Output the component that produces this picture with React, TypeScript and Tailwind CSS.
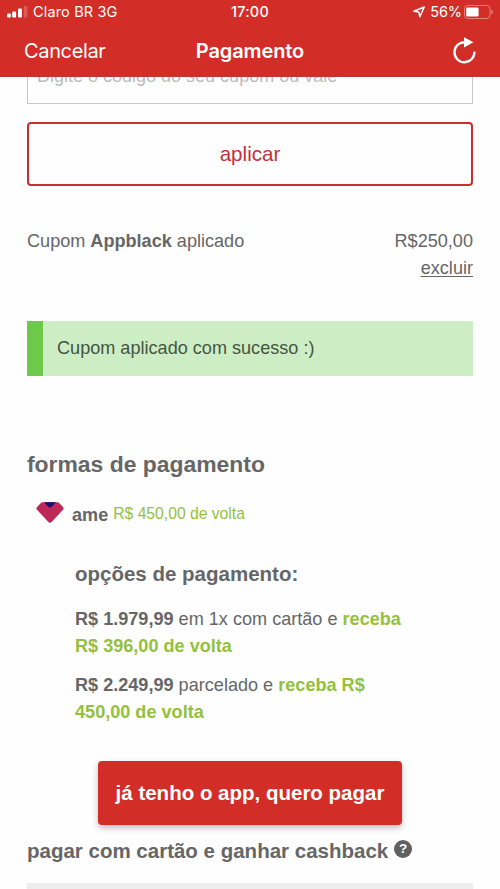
function SignalBars() {
  return (
    <svg width="21" height="12" viewBox="0 0 21 12" fill="#fff">
      <rect x="0" y="7.6" width="3.9" height="4" rx="1" />
      <rect x="5.2" y="5.6" width="3.9" height="6" rx="1" />
      <rect x="11" y="2.4" width="3.9" height="9.2" rx="1" />
      <rect x="16.8" y="0" width="3.6" height="11.6" rx="1" opacity="0.22" />
    </svg>
  );
}

function LocationIcon() {
  return (
    <svg width="12" height="12" viewBox="0 0 12 12" fill="none" stroke="#fff" strokeWidth="1.5" strokeLinejoin="round">
      <path d="M11.2 1 L0.9 5.2 L5.8 6.1 L6.9 10.8 Z" />
    </svg>
  );
}

function BatteryIcon() {
  return (
    <svg width="30" height="14" viewBox="0 0 30 14">
      <rect x="0.5" y="0.5" width="25.6" height="13" rx="3.4" fill="none" stroke="#fff" strokeOpacity="0.4" />
      <rect x="2.2" y="2.4" width="12.4" height="9.2" rx="1.4" fill="#fff" />
      <path d="M27.4 4.8 C29.2 5.3 29.2 8.7 27.4 9.2 Z" fill="#fff" opacity="0.45" />
    </svg>
  );
}

function ReloadIcon() {
  return (
    <svg width="24" height="28" viewBox="0 0 24 28">
      <path d="M21.4 14.6 A10 10 0 1 1 12.4 5.3" fill="none" stroke="#fff" strokeWidth="2.3" />
      <path d="M11 0.2 L20.4 5.2 L11 10.6 Z" fill="#fff" />
    </svg>
  );
}

function AmeLogo() {
  return (
    <svg width="28" height="22" viewBox="0 0 28 22">
      <path
        d="M6.6 0.2 H21.4 Q22.4 0.2 23.1 0.9 L27 5 Q28.2 6.4 27 7.8 L15.6 20 Q14 21.4 12.4 20 L1 7.8 Q-0.2 6.4 1 5 L4.9 0.9 Q5.6 0.2 6.6 0.2 Z"
        fill="#bd2859"
      />
      <path d="M8 0.2 H20 L15.4 5 Q14 6.2 12.6 5 Z" fill="#1c0c78" />
    </svg>
  );
}

export default function App() {
  return (
    <div className="w-[500px] h-[889px] overflow-hidden flex flex-col bg-[#fefefe] text-[#666] font-['Liberation_Sans',Arial,sans-serif]">
      <header className="h-[77px] shrink-0 bg-[#d32d27] border-b border-[#b83a35] text-white font-[Inter,sans-serif]">
        {/* Status bar */}
        <div className="h-[24px] grid grid-cols-3 items-center pl-[7px] pr-[6px] text-[14.5px] leading-none">
          <div className="flex items-center gap-[5px] whitespace-nowrap">
            <SignalBars />
            <span className="tracking-[0.15px]">Claro BR 3G</span>
          </div>
          <div className="-ml-px text-center font-medium tracking-[0.2px]">17:00</div>
          <div className="flex items-center justify-end">
            <LocationIcon />
            <span className="ml-[5px] mr-[2px] tracking-[-0.1px]">56%</span>
            <BatteryIcon />
          </div>
        </div>
        {/* Navigation bar */}
        <div className="h-[53px] grid grid-cols-3 items-center pl-[24px] pr-[23px]">
          <span className="text-[20px] tracking-[-0.35px]">Cancelar</span>
          <span className="-ml-px text-center text-[20px] font-semibold tracking-[-0.1px]">Pagamento</span>
          <div className="flex justify-end">
            <ReloadIcon />
          </div>
        </div>
      </header>

      <main className="px-[27px] flex-1 min-h-0">
        {/* Coupon field, scrolled under the header */}
        <div className="h-[27px] overflow-hidden flex flex-col justify-end">
          <div className="h-[62px] shrink-0 border border-[#c8c8c8] px-[9px] pt-[23px] text-[18px] leading-[20px] text-[#bbb]">
            Digite o código do seu cupom ou vale
          </div>
        </div>
        <button className="mt-[18px] w-full h-[64px] block rounded-[4px] border-2 border-[#cc2d2c] text-[20.6px] text-[#c4303a]">
          aplicar
        </button>

        <div className="mt-[42px] flex justify-between text-[18.1px] leading-[27px]">
          <p>
            Cupom <b>Appblack</b> aplicado
          </p>
          <div className="text-right">
            <p>R$250,00</p>
            <a className="underline underline-offset-2 decoration-1">excluir</a>
          </div>
        </div>

        <div className="mt-[39px] h-[55px] flex items-center bg-[#cdeec4] border-l-[16px] border-[#6cc949] pl-[14px] pt-px text-[18.1px] text-[#44553f]">
          Cupom aplicado com sucesso :)
        </div>

        <h2 className="mt-[73px] text-[22.9px] leading-[30px] font-bold">formas de pagamento</h2>

        <div className="mt-[23px] pl-[9px] flex h-[24px]">
          <AmeLogo />
          <b className="ml-[8px] text-[18.1px] leading-[26px]">ame</b>
          <span className="ml-[5px] text-[15.7px] leading-[23px] text-[#93c13d]">R$ 450,00 de volta</span>
        </div>

        <section className="mt-[34px] pl-[48px] text-[18.1px] leading-[26.6px]">
          <h3 className="text-[20.5px] leading-[28px] font-bold">opções de pagamento:</h3>
          <p className="mt-[18px]">
            <b>R$ 1.979,99</b> em 1x com cartão e <b className="text-[#93c13d]">receba</b>
            <br />
            <b className="text-[#93c13d]">R$ 396,00 de volta</b>
          </p>
          <p className="mt-[13px]">
            <b>R$ 2.249,99</b> parcelado e <b className="text-[#93c13d]">receba R$</b>
            <br />
            <b className="text-[#93c13d]">450,00 de volta</b>
          </p>
        </section>

        <button className="mt-[36px] mx-auto w-[304px] h-[64px] block rounded-[4px] bg-[#d32d27] text-white text-[20.5px] font-bold shadow-[0_3px_6px_rgba(0,0,0,0.25)]">
          já tenho o app, quero pagar
        </button>

        <div className="mt-[11px] h-[30px] flex items-center">
          <h3 className="text-[20.5px] leading-[30px] font-bold">pagar com cartão e ganhar cashback</h3>
          <span className="ml-[6px] mb-[4px] size-[18px] rounded-full bg-[#606060] text-white text-[13.5px] leading-[18px] font-bold text-center">
            ?
          </span>
        </div>
        <div className="mt-[17px] h-[10px] bg-[#ededed]" />
      </main>
    </div>
  );
}
